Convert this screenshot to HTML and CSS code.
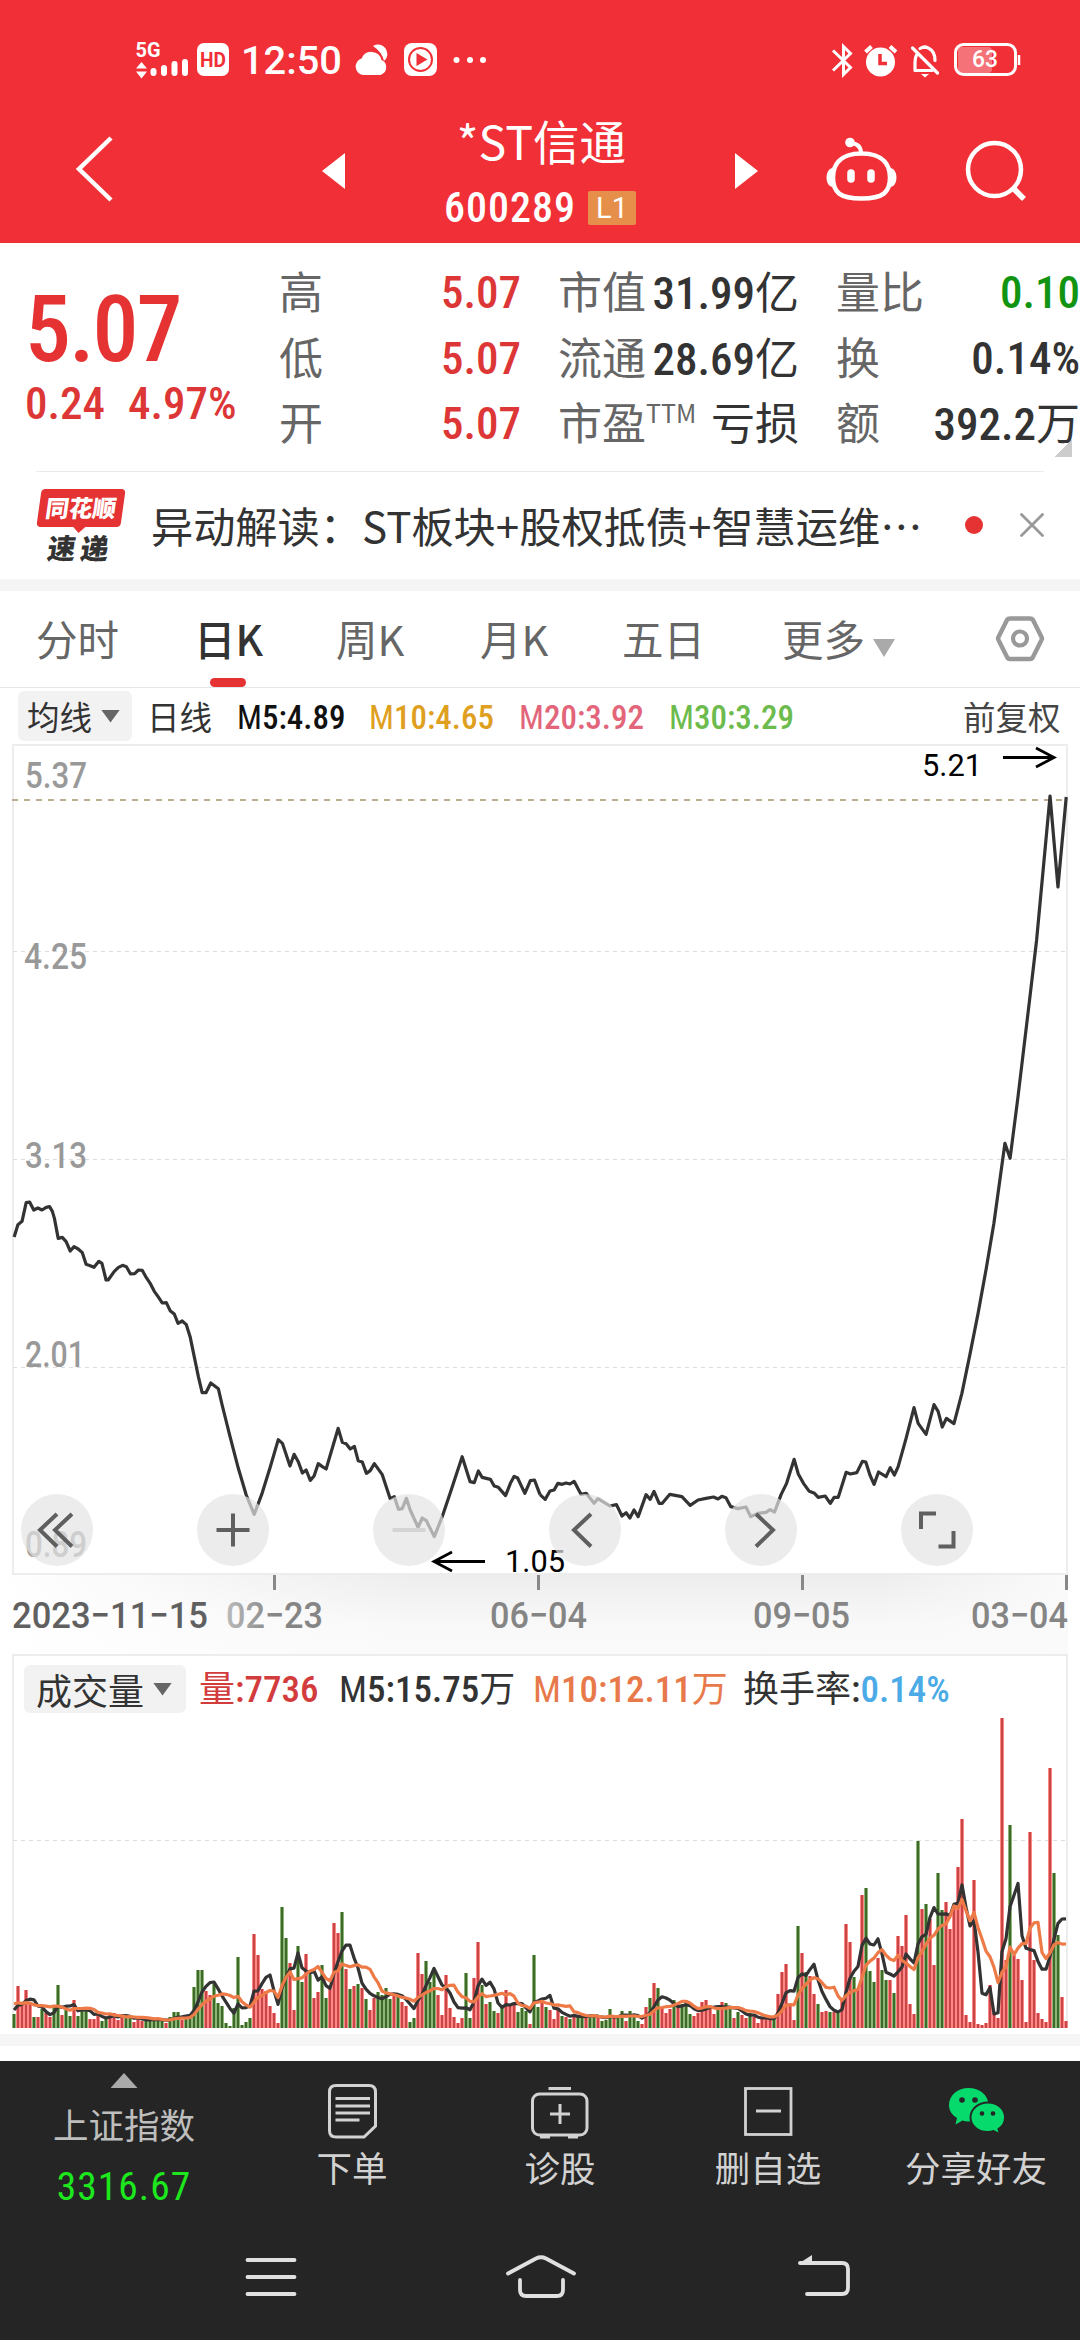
FILE: index.html
```html
<!DOCTYPE html>
<html lang="zh-CN">
<head>
<meta charset="utf-8">
<title>*ST信通 600289</title>
<link rel="stylesheet" href="styles.css">
</head>
<body>
<header class="top">
  <div class="status">
    <svg class="status-left" width="372" height="60" viewBox="120 30 372 60">
      <text class="net" x="135.500" y="57" textLength="25" lengthAdjust="spacingAndGlyphs">5G</text>
      <path fill="#fff" d="M136 68.500l5.500-6.500 5.500 6.500zM136 71.500h11l-5.500 7z"/>
      <path stroke="#fff" stroke-width="6" stroke-linecap="round" d="M153.500 71v2M164 68v5M174.500 64v9M185 62v11"/>
      <rect x="197" y="43" width="32" height="33" rx="7" fill="#fff"/>
      <text class="hd" x="200" y="67" textLength="26" lengthAdjust="spacingAndGlyphs">HD</text>
      <text class="clock" x="241" y="74" textLength="101" lengthAdjust="spacingAndGlyphs">12:50</text>
      <path fill="#fff" d="M363 75a8.500 8.500 0 0 1-1.500-16.500 10.500 10.500 0 0 1 20 1.500 8 8 0 0 1-1 15z"/>
      <path fill="#fff" d="M373 46a9 9 0 0 1 14 6 9 9 0 0 1-3 9q-2-9-11-15z"/>
      <rect x="404" y="43" width="33" height="33" rx="8" fill="#fff"/>
      <circle cx="420.500" cy="59.500" r="11.500" fill="none" stroke="#f12f37" stroke-width="2"/>
      <path fill="#f12f37" d="M416.500 53l11 6.500-11 6.500z"/>
      <g fill="#fff"><circle cx="456.500" cy="60" r="3"/><circle cx="470" cy="60" r="3"/><circle cx="483" cy="60" r="3"/></g>
    </svg>
    <svg class="status-right" width="196" height="60" viewBox="828 30 196 60">
      <path fill="none" stroke="#fff" stroke-width="3" d="M833 50.500l17.500 17-7 7V46.500l7 7-17.500 17"/>
      <circle cx="880.500" cy="62" r="14.500" fill="#fff"/>
      <path fill="none" stroke="#fff" stroke-width="4" d="M865.500 52l6-5.500M896 52l-6-5.500"/>
      <path fill="none" stroke="#f12f37" stroke-width="3.500" d="M880 54v9.500h7"/>
      <path fill="none" stroke="#fff" stroke-width="3.200" stroke-linecap="round" stroke-linejoin="round" d="M912.500 48l25 25M916.500 55q-1.500 3-1.500 8v7.500h17M920 48.500q5-3 9 0 6 3 6 12"/>
      <path fill="#fff" d="M921 74h8l-4 3.500zM920 49q5-6 9 0z"/>
      <rect x="958" y="47" width="34" height="26" rx="4" fill="#fff" fill-opacity=".33"/>
      <rect x="955.500" y="44.500" width="60" height="30" rx="8" fill="none" stroke="#fff" stroke-width="3"/>
      <path stroke="#fff" stroke-width="2.500" d="M1019 55v10"/>
      <text class="bat" x="972" y="67" textLength="26" lengthAdjust="spacingAndGlyphs">63</text>
    </svg>
  </div>
  <div class="titlebar">
    <svg class="back" width="60" height="80" viewBox="66 130 60 80"><path fill="none" stroke="#fff" stroke-width="4.500" d="M111 138L79 169l32 31"/></svg>
    <svg class="tri" width="23" height="36" viewBox="0 0 23 36"><path fill="#fff" d="M23 0v36L0 18z"/></svg>
    <div class="name">
      <div class="cn">*ST信通</div>
      <div class="code"><span class="num">600289</span><span class="lv">L1</span></div>
    </div>
    <svg class="tri" width="23" height="36" viewBox="0 0 23 36"><path fill="#fff" d="M0 0v36l23-18z"/></svg>
    <svg class="bot" width="72" height="68" viewBox="825 136 72 68">
      <path fill="none" stroke="#fff" stroke-width="4.500" d="M861.500 153.500c23 0 28.500 13 28.500 24 0 15-7 21-28.500 21s-28.500-6-28.500-21c0-11 5.500-24 28.500-24z"/>
      <path fill="none" stroke="#fff" stroke-width="4" stroke-linecap="round" d="M861 153q0-9-10-10"/>
      <circle cx="850" cy="142.500" r="4.800" fill="#fff"/>
      <path fill="#fff" d="M832 168q-5.500 2-5.500 9.500t5.500 9.500zM891 168q5.500 2 5.500 9.500t-5.500 9.500z"/>
      <path stroke="#fff" stroke-width="7.500" stroke-linecap="round" d="M851 173v6M871 173v6"/>
    </svg>
    <svg class="find" width="64" height="64" viewBox="964 139 64 64"><circle cx="994.500" cy="169.500" r="26.500" fill="none" stroke="#fff" stroke-width="4.500"/><path stroke="#fff" stroke-width="5.500" d="M1013 188l11 11"/></svg>
  </div>
</header>

<section class="quote">
  <div class="price">
    <div class="last num">5.07</div>
    <div class="chg num"><span>0.24</span><span>4.97%</span></div>
  </div>
  <div class="stats">
    <span class="k">高</span><span class="v num red">5.07</span>
    <span class="k">市值</span><span class="v"><b class="num">31.99</b>亿</span>
    <span class="k">量比</span><span class="v num green">0.10</span>
    <span class="k">低</span><span class="v num red">5.07</span>
    <span class="k">流通</span><span class="v"><b class="num">28.69</b>亿</span>
    <span class="k">换</span><span class="v num">0.14%</span>
    <span class="k">开</span><span class="v num red">5.07</span>
    <span class="k">市盈<sup>TTM</sup></span><span class="v">亏损</span>
    <span class="k">额</span><span class="v"><b class="num">392.2</b>万</span>
  </div>
  <i class="corner"></i>
</section>

<section class="news">
  <div class="logo"><div class="logo-a">同花顺</div><div class="logo-b">速递</div></div>
  <p class="headline">异动解读：ST板块+股权抵债+智慧运维⋯</p>
  <i class="dot"></i>
  <svg class="close" width="24" height="24" viewBox="0 0 24 24"><path stroke="#999" stroke-width="2.800" stroke-linecap="round" d="M1.500 1.500l21 21M22.500 1.500l-21 21"/></svg>
</section>

<nav class="tabs">
  <span>分时</span><span class="on">日K</span><span>周K</span><span>月K</span><span>五日</span>
  <span class="more">更多<i class="caret"></i></span>
  <svg width="50" height="48" viewBox="995 614 50 48"><path fill="none" stroke="#999" stroke-width="4.400" stroke-linejoin="round" d="M1010 618.500h20q2 0 3 1.500l8.500 17q1 1.500 0 3l-8.500 17q-1 2-3 2h-20q-2 0-3-2l-8.500-17q-1-1.500 0-3l8.500-17q1-1.500 3-1.500z"/><circle cx="1020" cy="638.500" r="7" fill="none" stroke="#999" stroke-width="4.200"/></svg>
</nav>

<div class="ma">
  <span class="drop">均线<i class="caret"></i></span>
  <span class="day">日线</span>
  <span class="num m5"><i>M</i>5:4.89</span><span class="num m10"><i>M</i>10:4.65</span><span class="num m20"><i>M</i>20:3.92</span><span class="num m30"><i>M</i>30:3.29</span>
  <span class="adj">前复权</span>
</div>

<section class="chart">
  <svg class="kline" width="1080" height="911" viewBox="0 743 1080 911">
    <defs>
      <linearGradient id="shade" x1="0" y1="0" x2="0" y2="1"><stop offset="0" stop-color="#ededed"/><stop offset=".6" stop-color="#f8f8f8"/><stop offset="1" stop-color="#fafafa"/></linearGradient>
      <linearGradient id="fade" x1="0" y1="0" x2="1" y2="0"><stop offset="0" stop-color="#fff"/><stop offset="1" stop-color="#fff" stop-opacity="0"/></linearGradient>
      <linearGradient id="fadeend" x1="0" y1="0" x2="1" y2="0"><stop offset="0" stop-color="#fafafa" stop-opacity="0"/><stop offset="1" stop-color="#fafafa"/></linearGradient>
      <linearGradient id="datefade" gradientUnits="userSpaceOnUse" x1="225" y1="0" x2="275" y2="0"><stop offset="0" stop-color="#bbb"/><stop offset="1" stop-color="#858585"/></linearGradient>
    </defs>
    <rect x="0" y="1575" width="1068" height="79" fill="url(#shade)"/>
    <rect x="0" y="1575" width="420" height="79" fill="url(#fade)"/>
    <rect x="880" y="1575" width="188" height="79" fill="url(#fadeend)"/>
    <rect x="13" y="745" width="1054" height="829" fill="none" stroke="#ededed" stroke-width="2"/>
    <g stroke="#dedede" stroke-width="1" stroke-dasharray="4 4"><path d="M13 951.500h1054M13 1159.500h1054M13 1367.500h1054"/></g>
    <path d="M12 800h1056" stroke="#bdae92" stroke-width="2" stroke-dasharray="6 6"/>
    <g class="axis">
      <text x="25" y="788" textLength="62" lengthAdjust="spacingAndGlyphs">5.37</text>
      <text x="24" y="969" textLength="63" lengthAdjust="spacingAndGlyphs">4.25</text>
      <text x="25" y="1168" textLength="62" lengthAdjust="spacingAndGlyphs">3.13</text>
      <text x="25" y="1367" textLength="60" lengthAdjust="spacingAndGlyphs">2.01</text>
      <text x="25" y="1557" textLength="62" lengthAdjust="spacingAndGlyphs">0.89</text>
    </g>
    <g fill="none" stroke="#333" stroke-width="3.200" stroke-linejoin="round">
      <path vector-effect="non-scaling-stroke" transform="translate(0 1150) scale(.34439 .33333)" d="M41 261L52 224 64 214 76 158 86 156 98 180 110 174 122 180 134 172 144 170 152 184 158 205 169 265 181 262 192 275 204 303 215 290 227 297 239 308 250 343 262 347 273 352 287 334 296 340 308 390 314 390 332 364 344 352 356 346 367 350 379 372 391 371 402 360 413 361 425 383 436 400 448 424 459 440 471 459 483 458 494 482 506 492 517 520 529 513 541 524 552 560 564 620 576 680 587 728 598 728 612 699 634 716 645 765 668 860 692 955 715 1035 738 1093 761 1030 785 950 808 869 820 880 842 948 854 913 866 935 878 969 889 960 901 991 912 978 924 941 936 950 947 957 959 915 982 835 994 877 1005 881 1017 897 1029 889 1040 932 1052 936 1064 970 1075 962 1087 941 1110 974 1133 1046 1145 1040 1157 1078 1168 1076 1180 1045 1191 1080 1214 1132 1226 1104 1238 1112 1261 1160 1284 1100 1307 1030 1342 920 1365 995 1377 998 1389 963 1400 982 1424 988 1435 1008 1447 1012 1468 1037 1482 1000 1493 979 1503 984 1524 1030 1540 992 1552 990 1568 1034"/>
      <path vector-effect="non-scaling-stroke" transform="translate(540 1150) scale(.34439 .33333)" d="M0 1034L15 1048 29 1023 41 1020 52 1000 64 1003 76 999 87 1002 99 994 119 1033 134 1030 157 1060 168 1046 203 1068 222 1064 238 1098 250 1088 261 1104 273 1080 285 1100 308 1034 320 1048 331 1024 346 1060 355 1060 377 1033 412 1040 436 1066 459 1050 482 1045 504 1041 517 1047 528 1039 540 1043 554 1070 575 1076 598 1071 612 1100 633 1090 656 1087 668 1079 681 1086 700 1034 716 1000 738 928 750 972 765 1000 782 1024 797 1030 808 1042 828 1038 843 1060 854 1042 866 1042 889 967 901 972 920 968 936 934 946 936 958 975 970 1003 983 966 1005 980 1017 953 1029 975 1040 950 1063 865 1086 773 1098 820 1121 853 1144 764 1156 784 1168 831 1180 805 1202 821 1225 730 1249 610 1272 490 1295 360 1318 220 1330 130 1350 -20 1365 25 1388 -160 1421 -445 1442 -630 1481 -1062 1504 -789 1528 -1059"/>
    </g>
    <g class="mark">
      <text x="922" y="776" textLength="60" lengthAdjust="spacingAndGlyphs">5.21</text>
      <text x="505" y="1572" textLength="60" lengthAdjust="spacingAndGlyphs">1.05</text>
      <path fill="none" stroke="#000" stroke-width="2.800" d="M1003 757.500h50M1036 748l18 9.500-18 9.500M485 1561.500h-50M452 1552l-18 9.500 18 9.500"/>
    </g>
    <path stroke="#888" stroke-width="3" d="M274.500 1575v15M538.500 1575v15M802.500 1575v15M1066.500 1575v15"/>
    <g class="dates">
      <text x="12" y="1628" textLength="196" lengthAdjust="spacingAndGlyphs" fill="#606060">2023−11−15</text>
      <text x="226" y="1628" textLength="97" lengthAdjust="spacingAndGlyphs" fill="url(#datefade)">02−23</text>
      <text x="490" y="1628" textLength="97" lengthAdjust="spacingAndGlyphs">06−04</text>
      <text x="753" y="1628" textLength="97" lengthAdjust="spacingAndGlyphs">09−05</text>
      <text x="971" y="1628" textLength="97" lengthAdjust="spacingAndGlyphs">03−04</text>
    </g>
  </svg>
  <div class="controls">
    <svg viewBox="0 0 72 72"><path d="M36 20L19 36l17 16.500M51 20L34 36l17 16.500"/></svg>
    <svg viewBox="0 0 72 72"><path d="M36 19.500v33M19.500 36h33"/></svg>
    <svg class="off" viewBox="0 0 72 72"><path d="M19.500 36h33"/></svg>
    <svg viewBox="0 0 72 72"><path d="M42 20L25 36l17 16.500"/></svg>
    <svg viewBox="0 0 72 72"><path d="M31 20l17 16-17 16.500"/></svg>
    <svg viewBox="0 0 72 72"><path d="M35 19.500H20V35M37.500 52.500h15V37"/></svg>
  </div>
</section>

<section class="volume">
  <div class="vhead">
    <span class="drop">成交量<i class="caret"></i></span>
    <span class="va">量<b class="num">:7736</b></span>
    <span class="vb"><b class="num"><i>M</i>5:15.75</b>万</span>
    <span class="vc"><b class="num"><i>M</i>10:12.11</b>万</span>
    <span class="vd">换手率<b class="num">:<em>0.14%</em></b></span>
  </div>
  <svg id="bars" width="1080" height="376" viewBox="0 1654 1080 376">
    <path d="M13 2028V1655h1054v373" fill="none" stroke="#ededed" stroke-width="2"/>
    <path d="M13 1840.500h1054" stroke="#dedede" stroke-width="1" stroke-dasharray="4 4"/>
  </svg>
</section>

<footer class="dock">
  <div class="actions">
    <div class="index"><i class="up"></i><span class="iname">上证指数</span><span class="ival">3316.67</span></div>
    <div class="act"><svg width="54" height="58" viewBox="325 2082 54 58"><path fill="none" stroke="#d2d2d2" stroke-width="3" d="M336 2085.500h33q6.500 0 6.500 6.500v34l-11.500 11h-28q-6.500 0-6.500-6.500V2092q0-6.500 6.500-6.500zM335.500 2098.500H370M335.500 2106H370M335.500 2113H370M335.500 2120h24"/></svg><span>下单</span></div>
    <div class="act"><svg width="60" height="58" viewBox="530 2082 60 58"><rect x="532.500" y="2094" width="54.500" height="41" rx="7" fill="none" stroke="#d2d2d2" stroke-width="3"/><path stroke="#d2d2d2" stroke-width="3" d="M548.500 2088.500H571M560 2104v20M550 2114h20M540 2137h10M568 2137h10"/></svg><span>诊股</span></div>
    <div class="act"><svg width="52" height="58" viewBox="741 2082 52 58"><rect x="744.500" y="2088.500" width="45.500" height="46" fill="none" stroke="#d2d2d2" stroke-width="2.800"/><path stroke="#d2d2d2" stroke-width="3" d="M755 2111h25"/></svg><span>删自选</span></div>
    <div class="act"><svg width="58" height="58" viewBox="946 2082 58 58"><path fill="#07da6c" d="M967.500 2088c11 0 20 7 20 17s-9 16.500-20 16.500q-3 0-6-1l-7 4 1.500-6.500c-5-3-8-7.500-8-13 0-10 9-17 19.500-17z"/><path fill="#07da6c" stroke="#252525" stroke-width="2" d="M987 2102.500c9.500 0 17 6.500 17 15 0 5-2.500 9-6.500 11.500l1.500 5.500-6.500-3.500q-3 1-5.500 1c-9.500 0-17.500-6-17.500-14.500s8-15 17.500-15z"/><g fill="#252525"><circle cx="961" cy="2100" r="2.800"/><circle cx="974" cy="2100" r="2.800"/><circle cx="981" cy="2113.500" r="2.300"/><circle cx="992" cy="2113.500" r="2.300"/></g></svg><span>分享好友</span></div>
  </div>
  <svg class="sysnav" width="1080" height="60" viewBox="0 2246 1080 60">
    <g fill="none" stroke="#e0e0e0" stroke-width="3.800" stroke-linecap="round" stroke-linejoin="round">
      <path d="M247.500 2260h47M247.500 2277h47M247.500 2294h47"/>
      <path d="M508 2273.500l28-15q5-2.500 10 0l28 15M520 2280v10q0 6 6 6h31q6 0 6-6v-10"/>
      <path d="M800 2263h42q6 0 6 6v19q0 6-6 6h-35"/>
    </g>
    <path fill="#e0e0e0" d="M798 2264l14-9v9z"/>
  </svg>
</footer>
<script src="volume.js"></script>
</body>
</html>
```

FILE: styles.css
```css
* { box-sizing: border-box; margin: 0; padding: 0; }
body { width: 1080px; height: 2340px; overflow: hidden; background: #fff; color: #333; font-family: "Noto Sans CJK SC", sans-serif; line-height: 1; }
svg { display: block; flex: none; }
i, em, b { font-style: normal; font-weight: inherit; }
.num { font-family: Roboto, "Noto Sans CJK SC", sans-serif; font-weight: 500; font-stretch: 85%; }
.num i { font-weight: 400; }
.red { color: #dd3636; }
.v.green { color: #119411; }

.top { height: 243px; background: #f12f37; color: #fff; }
.status { height: 100px; padding: 30px 56px 0 120px; display: flex; justify-content: space-between; }
.status text { fill: #fff; font-family: Roboto, sans-serif; }
.status .net { font-size: 20px; font-weight: 700; }
.status .hd { font-size: 21px; font-weight: 700; fill: #f12f37; }
.status .clock { font-size: 39px; font-weight: 500; }
.status .bat { font-size: 23px; font-weight: 500; }
.titlebar { height: 143px; display: grid; grid-template-columns: 256px 23px 390px 23px 67px 72px 67px 64px; padding-left: 66px; align-items: start; }
.back { margin-top: 30px; }
.titlebar .tri { margin-top: 53px; }
.name { text-align: center; padding-top: 13px; }
.cn { font-size: 46.500px; line-height: 54px; padding-left: 3px; }
.code { display: flex; justify-content: center; align-items: center; gap: 12px; margin-top: 21px; height: 40px; font-size: 42px; }
.code .num { letter-spacing: 1px; }
.lv { width: 48px; height: 34px; border-radius: 2px; background: #e58f4a; font: 400 29px/34px Roboto, sans-serif; }
.bot { grid-column: 6; margin-top: 36px; }
.find { grid-column: 8; margin-top: 39px; }

.quote { position: relative; height: 228px; display: flex; }
.price { width: 280px; padding-left: 25px; }
.last { margin-top: 41px; font-size: 92px; line-height: 92px; letter-spacing: -2px; color: #e53232; }
.chg { margin-top: 3px; display: flex; gap: 23px; font-size: 45px; line-height: 50px; color: #dd3636; }
.stats { height: 200px; margin-top: 16px; display: grid; grid-template-columns: 81px 161px 126px 152px 128px 153px; grid-auto-rows: 65.500px; align-items: start; }
.stats .k { font-size: 44px; color: #666; white-space: nowrap; line-height: 62px; }
.stats .k:nth-child(6n+3), .stats .k:nth-child(6n+5) { padding-left: 37px; }
.stats .v { font-size: 44px; text-align: right; white-space: nowrap; line-height: 62px; justify-self: end; }
.stats .v.num { line-height: 67px; }
.stats .num { font-size: 45px; }
sup { font-size: 25px; line-height: 1; vertical-align: 17px; }
.corner { position: absolute; right: 8px; bottom: 14px; width: 18px; height: 18px; background: linear-gradient(135deg, transparent 50%, #ccc 50%); }

.news { position: relative; height: 120px; display: flex; align-items: center; padding: 0 36px; border-bottom: 12px solid #f5f5f5; }
.news::before { content: ""; position: absolute; left: 36px; right: 36px; top: 0; height: 1px; background: #eaeaea; }
.logo { width: 90px; height: 72px; text-align: center; }
.logo-a { position: relative; width: 84px; height: 38px; margin-left: 3px; transform: skewX(-8deg); border-radius: 4px; background: #e53232; color: #fff; font-size: 23.500px; font-weight: 900; line-height: 37px; }
.logo-a::after { content: ""; position: absolute; left: 36px; top: 37px; border: 7px solid transparent; border-top-color: #e53232; border-bottom: 0; }
.logo-b { margin-top: 6px; font-size: 28px; line-height: 28px; font-weight: 900; transform: skewX(-8deg); letter-spacing: 5px; }
.headline { flex: none; width: 814px; margin-left: 25px; font-size: 42.200px; line-height: 60px; white-space: nowrap; }
.dot { width: 18px; height: 18px; border-radius: 50%; background: #e53232; flex: none; }
.close { margin-left: 37px; }

.caret { display: inline-block; width: 19px; height: 13px; background: #666; clip-path: polygon(0 0, 100% 0, 50% 100%); }
.tabs { height: 97px; display: grid; grid-template-columns: 160px 140px 144px 142px 160px 213px 50px; padding-left: 36px; border-bottom: 1px solid #e6e6e6; font-size: 41.500px; line-height: 94px; color: #666; }
.tabs svg { margin-top: 23px; }
.tabs .on { position: relative; color: #333; font-weight: 500; }
.tabs .on::before { content: ""; display: inline-block; margin-left: -2px; }
.tabs .on::after { content: ""; position: absolute; left: 14px; bottom: 0; width: 36px; height: 9px; border-radius: 5px; background: #e53232; }
.tabs .caret { width: 22px; height: 18px; background: #aaa; margin-left: 8px; vertical-align: -1px; }

.ma { height: 55px; display: grid; grid-template-columns: 129px 90px 132px 150px 150px 294px 110px; padding-left: 18px; font-size: 32.500px; line-height: 55px; }
.drop { display: flex; align-items: center; background: #f2f2f2; border-radius: 6px; }
.ma .drop { width: 114px; height: 50px; margin-top: 3px; padding-left: 9px; gap: 9px; line-height: 48px; }
.ma .num { font-size: 33px; line-height: 59px; white-space: nowrap; }
.m5 { color: #111; } .m10 { color: #df9f1f; } .m20 { color: #e2657a; } .m30 { color: #6cbb4c; }
.adj { color: #444; }

.chart { position: relative; height: 911px; }
.chart text { font-family: Roboto, sans-serif; font-weight: 500; }
.axis { fill: #999; font-size: 37px; }
.dates { fill: #858585; font-size: 37px; }
.chart .mark text { fill: #000; font-size: 31px; font-weight: 400; }
.controls { position: absolute; left: 21px; top: 751px; display: flex; gap: 104px; }
.controls svg { width: 72px; height: 72px; border-radius: 50%; background: rgba(228, 228, 228, .7); fill: none; stroke: #5f5f5f; stroke-width: 4; }
.controls .off { stroke: #d4d4d4; }

.volume { position: relative; height: 392px; border-bottom: 12px solid #f5f5f5; }
.vhead { position: absolute; left: 24px; top: 11px; display: grid; grid-template-columns: 175px 140px 194px 210px 220px; font-size: 36px; line-height: 43px; white-space: nowrap; }
.vhead .num { font-size: 37px; }
.vhead .drop { width: 162px; height: 48px; padding-left: 12px; gap: 9px; }
.va { color: #d33c3c; } .vc { color: #e8794a; } .vd em { color: #4aabe6; }

.dock { margin-top: 15px; height: 279px; background: #252525; color: #d2d2d2; }
.actions { display: grid; grid-template-columns: 248px repeat(4, 208px); height: 185px; }
.index, .act { display: flex; flex-direction: column; align-items: center; font-size: 35.500px; line-height: 44px; }
.up { width: 27px; height: 15px; margin-top: 12px; background: #aaa; clip-path: polygon(50% 0, 100% 100%, 0 100%); }
.iname { margin-top: 14px; color: #bebebe; }
.ival { margin-top: 19px; font-family: Roboto, sans-serif; font-size: 39.500px; font-stretch: 85%; letter-spacing: 1px; color: #1de81d; }
.act svg { margin-top: 21px; }
.act span { margin-top: 5px; }
```

FILE: volume.js
```js
// Daily volume in plot pixels; negative values are falling days.
const days = [
  -14, 42, 24, 38, 26, -11, 11, -19, 15, 11, -21, -43, 13, -21, -12, 28, -12, -19, -19, 9,
  9, 14, -7, -11, 14, 15, 8, 13, -12, -10, 6, 10, 7, -8, -9, -9, -9, -7, 5, -11,
  -16, -16, 8, -9, -14, -41, -58, -58, 37, 33, -44, -25, -22, -5, -2, -20, -71, -3, -6, -10,
  94, 73, 39, 37, 22, 15, 5, -121, -90, 65, 18, -82, -46, 74, -53, 30, 36, -63, -30, 39,
  105, 95, -116, 59, -39, 42, -44, 40, -29, 18, 30, -36, -33, -40, -29, 33, -33, 26, 22, -6,
  -10, 75, 54, -67, -46, -56, 33, 13, 53, 20, 11, 5, 10, -55, -10, 50, 86, -43, 24, -26,
  -17, 15, -21, 38, 24, 24, -16, -20, -17, 4, -73, -21, 30, -21, 18, 9, 18, -12, 11, -9,
  13, -13, -12, 10, -13, -13, 11, -7, -8, -19, 10, -11, -17, 7, -17, -14, -7, 4, 21, -30,
  45, -40, 20, 15, 19, -28, 24, -24, -22, -14, 12, 15, 26, 28, 21, 14, -18, 26, -25, -21,
  10, -16, 13, 10, -15, 11, 5, 9, 11, 11, -11, 34, 56, 64, 22, 8, -102, 75, -56, 52,
  34, -24, 16, 17, -16, 16, -15, 28, 104, 86, -51, 39, 133, -140, -57, -46, 70, -58, -48, 48,
  -35, 92, 82, 113, 24, 14, -187, 119, -124, 109, 63, -155, -118, 126, 99, 121, 161, 209, 13, 6,
  148, 4, 3, 5, 43, 15, 10, 310, 68, -203, 73, 69, 48, 6, 196, 68, 15, 9, 6, 260,
  -155, -93, 31, 7
];
const earlier = [30, 30, 30, 30, 30, 19, 19, 19, 19];
const NS = "http://www.w3.org/2000/svg";
const svg = document.getElementById("bars");
const base = 2028;

function add(tag, attrs) {
  const el = document.createElementNS(NS, tag);
  for (const key in attrs) el.setAttribute(key, attrs[key]);
  svg.appendChild(el);
}

days.forEach((d, i) => {
  const h = Math.abs(d);
  const x = 12 + 4 * i;
  add("rect", { x: x, y: base - h, width: 4, height: h, fill: d < 0 ? "#8db57c" : "#ff8787" });
  add("rect", { x: x + 1, y: base - h, width: 2, height: h, fill: d < 0 ? "#3d6a26" : "#c84646" });
});

function average(n) {
  const all = earlier.concat(days.map(Math.abs));
  return days.map((_, i) => {
    const end = i + earlier.length + 1;
    const mean = all.slice(end - n, end).reduce((a, b) => a + b, 0) / n;
    return (14 + 4 * i) + "," + (base - mean).toFixed(1);
  }).join(" ");
}
add("polyline", { points: average(5), fill: "none", stroke: "#333", "stroke-width": 3.2, "stroke-linejoin": "round" });
add("polyline", { points: average(10), fill: "none", stroke: "#ee7a48", "stroke-width": 3.2, "stroke-linejoin": "round" });
```
